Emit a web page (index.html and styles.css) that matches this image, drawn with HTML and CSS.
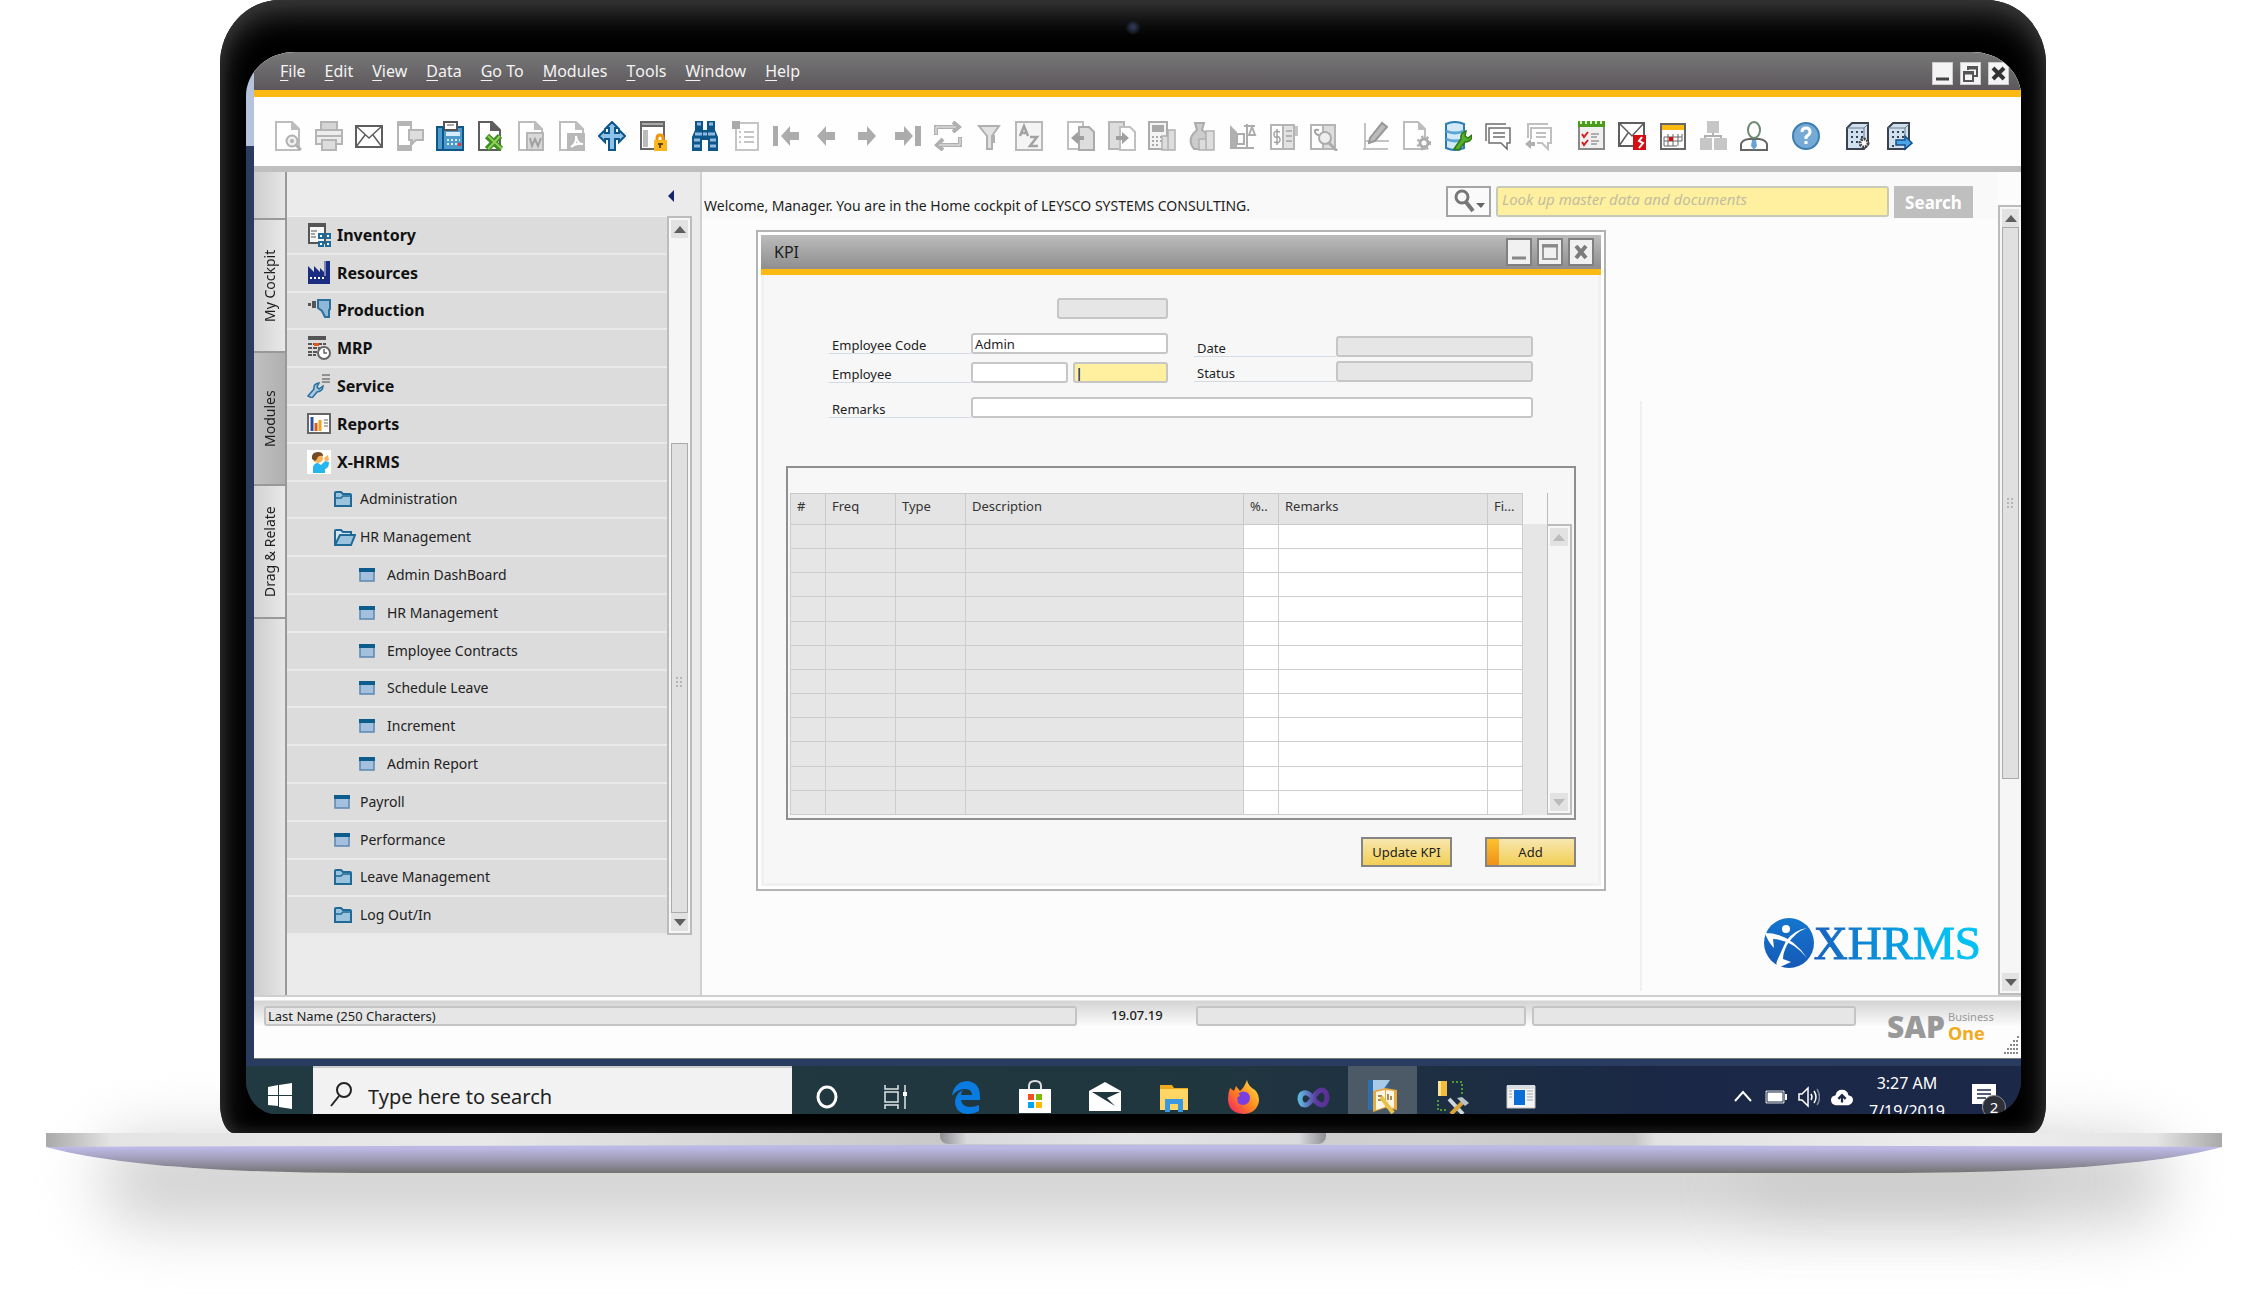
FILE: index.html
```html
<!DOCTYPE html>
<html lang="en">
<head>
<meta charset="utf-8">
<meta name="viewport" content="width=device-width, initial-scale=1">
<title>X-HRMS for SAP Business One</title>
<link rel="stylesheet" href="styles.css">
</head>
<body>
<svg class="sprite" aria-hidden="true">
  <symbol id="page" viewBox="0 0 28 30"><path d="M2 1h16l7 7v21H2z" fill="#fff" stroke="#bdbdbd" stroke-width="2"/><path d="M17 0v9h9z" fill="#bdbdbd"/></symbol>
  <symbol id="folder" viewBox="0 0 18 16"><path d="M1 15V2q0-1 1-1h5l2 2h7q1 0 1 1v11z" fill="#9cc3dd" stroke="#1f6a97" stroke-width="2"/><path d="M1 7h6l2-2h8" fill="none" stroke="#1f6a97" stroke-width="1.5"/></symbol>
  <symbol id="folder-open" viewBox="0 0 22 17"><path d="M1 16V2q0-1 1-1h5l2 2h8v3" fill="#d5e4ef" stroke="#1f6a97" stroke-width="2"/><path d="M1 16L6 6h15l-4 10z" fill="#9cc3dd" stroke="#1f6a97" stroke-width="2"/></symbol>
  <symbol id="form" viewBox="0 0 16 14"><path d="M1 1h14v12H1z" fill="#a3c0de" stroke="#5b87b0" stroke-width="1.5"/><path d="M0 0h16v4H0z" fill="#0d5c8c"/></symbol>
</svg>

<main class="stage">
  <div class="lid">
    <span class="camera"></span>
    <div class="screen">
      <div class="desktop">
        <section class="app">
          <header class="menubar">
            <nav class="menus" aria-label="Menu">
              <button><u>F</u>ile</button><button><u>E</u>dit</button><button><u>V</u>iew</button><button><u>D</u>ata</button><button><u>G</u>o To</button><button><u>M</u>odules</button><button><u>T</u>ools</button><button><u>W</u>indow</button><button><u>H</u>elp</button>
            </nav>
            <div class="frame-buttons">
              <button aria-label="Minimize"><svg viewBox="0 0 21 23"><path d="M4 17h13" stroke="#444" stroke-width="3"/></svg></button>
              <button aria-label="Restore"><svg viewBox="0 0 21 23"><path d="M8 8V5h9v9h-3M4 10h9v9H4z" fill="none" stroke="#555" stroke-width="2"/><path d="M4 11h9M8 6h9" stroke="#555" stroke-width="3"/></svg></button>
              <button aria-label="Close"><svg viewBox="0 0 21 23"><path d="M5 6l11 11M16 6L5 17" stroke="#333" stroke-width="4"/></svg></button>
            </div>
          </header>

          <div class="toolbar" role="toolbar" aria-label="Tools">
            <div class="tools t10">
              <button aria-label="Preview"><svg viewBox="0 0 28 30"><use href="#page"/><circle cx="18" cy="20" r="5.500" fill="#eee" stroke="#b0b0b0" stroke-width="2"/><circle cx="18" cy="20" r="2" fill="#b0b0b0"/><path d="M22 24l5 5" stroke="#b0b0b0" stroke-width="3"/></svg></button>
              <button aria-label="Print"><svg viewBox="0 0 28 30"><path d="M6 1h16v8H6z" fill="#d5d5d5" stroke="#b5b5b5" stroke-width="2"/><path d="M1 9h26v14H1z" fill="#ededed" stroke="#b5b5b5" stroke-width="2"/><path d="M1 15h26" stroke="#b5b5b5" stroke-width="2"/><path d="M7 19h14v10H7z" fill="#ddd" stroke="#b5b5b5" stroke-width="2"/></svg></button>
              <button aria-label="Email"><svg viewBox="0 0 28 30"><path d="M1 5h26v21H1z" fill="#fff" stroke="#5e5e5e" stroke-width="2"/><path d="M1 5l13 12L27 5M1 26l9-12M27 26l-9-12" fill="none" stroke="#5e5e5e" stroke-width="1.500"/></svg></button>
              <button aria-label="SMS"><svg viewBox="0 0 28 30"><path d="M2 1h13v28H2z" fill="#fff" stroke="#b5b5b5" stroke-width="2"/><path d="M1 0h15v5H1zM1 24h15v6H1z" fill="#b5b5b5"/><path d="M13 9h14v10h-7l-4 4v-4h-3z" fill="#ddd" stroke="#b5b5b5" stroke-width="2"/></svg></button>
              <button aria-label="Fax"><svg viewBox="0 0 28 30"><path d="M1 6h26v23H1z" fill="#4e9acb" stroke="#0c568a" stroke-width="2"/><path d="M8 1h13v8H8z" fill="#fff" stroke="#555" stroke-width="2"/><path d="M11 4h7" stroke="#555"/><path d="M7 6v23" stroke="#0c568a" stroke-width="2"/><path d="M10 11h14v4H10z" fill="#d8ebf8"/><path d="M11 19h13M11 23h13" stroke="#d8ebf8" stroke-width="2" stroke-dasharray="2 2"/><path d="M22 22h3v3h-3z" fill="#e33"/></svg></button>
              <button aria-label="Export to Excel"><svg viewBox="0 0 28 30"><path d="M2 1h13l8 8v20H2z" fill="#fff" stroke="#5e5e5e" stroke-width="2"/><path d="M13 0l11 10H13z" fill="#5e5e5e"/><path d="M10 15l14 13M23 15L10 28" stroke="#3f8f1e" stroke-width="6"/><path d="M11 15l14 13M23 15L11 28" stroke="#8fce5a" stroke-width="2"/></svg></button>
              <button aria-label="Export to Word"><svg viewBox="0 0 28 30"><use href="#page"/><path d="M10 12h16v17H10z" fill="#d8d8d8" stroke="#b5b5b5" stroke-width="2"/><path d="M13 17l2 8 3-7 3 7 3-8" fill="none" stroke="#a0a0a0" stroke-width="2"/></svg></button>
              <button aria-label="Export to PDF"><svg viewBox="0 0 28 30"><use href="#page"/><path d="M9 12h18v18H9z" fill="#b8b8b8"/><path d="M13 26q6-4 5-11 1 8 7 8-7-1-12 3z" fill="none" stroke="#fff" stroke-width="2"/></svg></button>
              <button aria-label="Launch application"><svg viewBox="0 0 28 30"><path d="M14 1l6 6h-3v5h4V9l6 6-6 6v-3h-4v11h-6V18H7v3l-6-6 6-6v3h4V7H8z" fill="#8fc2e8" stroke="#0c568a" stroke-width="2"/></svg></button>
              <button aria-label="Lock screen"><svg viewBox="0 0 28 30"><path d="M2 1h23v27H2z" fill="#fff" stroke="#666" stroke-width="2"/><path d="M1 0h25v6H1z" fill="#666"/><path d="M3 3h21" stroke="#eee"/><path d="M4 9h5v17H4z" fill="#bbb"/><path d="M18 20v-3q0-3 3-3t3 3v3" fill="none" stroke="#f29400" stroke-width="3"/><path d="M15 19h13v11H15z" fill="#fcb71e"/><path d="M21 22v5M19 23h5" stroke="#6b4700" stroke-width="2"/></svg></button>
            </div>
            <div class="tools t9">
              <button aria-label="Find"><svg viewBox="0 0 28 30"><path d="M4 0h8v9h4V0h8v9l3 7v14H17V19h-6v11H1V16l3-7z" fill="#0c568a"/><path d="M6 3h4M18 3h4M4 13h7M17 13h7M3 19h6M19 19h6M3 25h6M19 25h6M12 13h4" stroke="#8fb9de" stroke-width="3"/></svg></button>
              <button aria-label="Add record"><svg viewBox="0 0 28 30"><path d="M4 2h22v27H4z" fill="#fff" stroke="#c5c5c5" stroke-width="2"/><path d="M0 0h8v8H0z" fill="#aaa"/><path d="M7 11h2M7 16h2M7 21h2M12 11h10M12 16h10M12 21h10" stroke="#c5c5c5" stroke-width="2"/></svg></button>
              <button aria-label="First record"><svg viewBox="0 0 28 30"><path d="M1 5h5v20H1zM9 15L18 5v6h9v8h-9v6z" fill="#acacac"/></svg></button>
              <button aria-label="Previous record"><svg viewBox="0 0 28 30"><path d="M4 15L13 5v6h9v8h-9v6z" fill="#acacac"/></svg></button>
              <button aria-label="Next record"><svg viewBox="0 0 28 30"><path d="M23 15L14 5v6H5v8h9v6z" fill="#acacac"/></svg></button>
              <button aria-label="Last record"><svg viewBox="0 0 28 30"><path d="M27 5h-6v20h6zM19 15L10 5v6H1v8h9v6z" fill="#acacac"/></svg></button>
              <button aria-label="Refresh"><svg viewBox="0 0 28 30"><path d="M2 14V6h22M19 1l6 5-6 5M26 16v8H3M9 18l-6 6 6 5" fill="none" stroke="#b0b0b0" stroke-width="4"/><path d="M2 13V6h20M26 17v7H5" fill="none" stroke="#eee"/></svg></button>
              <button aria-label="Filter"><svg viewBox="0 0 28 30"><path d="M4 5h20l-7 10v13h-5V15z" fill="#e2e2e2" stroke="#b0b0b0" stroke-width="2"/><path d="M19 14v7h-3" fill="none" stroke="#b0b0b0" stroke-width="2"/></svg></button>
              <button aria-label="Sort"><svg viewBox="0 0 28 30"><path d="M1 1h26v28H1z" fill="#f4f4f4" stroke="#b8b8b8" stroke-width="2"/><path d="M5 15l4-10 4 10M6 12h6M15 16h7l-7 9h8" fill="none" stroke="#a2a2a2" stroke-width="2.500"/></svg></button>
            </div>
            <div class="tools t7">
              <button aria-label="Base document"><svg viewBox="0 0 28 30"><path d="M1 1h15v27H1z" fill="#fff" stroke="#c0c0c0" stroke-width="2"/><path d="M12 6h10l5 5v18H12z" fill="#ddd" stroke="#aaa" stroke-width="2"/><path d="M4 17l7-6v4h6v4h-6v4z" fill="#9f9f9f"/></svg></button>
              <button aria-label="Target document"><svg viewBox="0 0 28 30"><path d="M1 1h15v27H1z" fill="#ddd" stroke="#b5b5b5" stroke-width="2"/><path d="M12 6h10l5 5v18H12z" fill="#fff" stroke="#c0c0c0" stroke-width="2"/><path d="M21 17l-7-6v4H8v4h6v4z" fill="#9f9f9f"/></svg></button>
              <button aria-label="Gross profit"><svg viewBox="0 0 28 30"><path d="M1 1h18v27H1z" fill="#f3f3f3" stroke="#acacac" stroke-width="2"/><path d="M4 4h12v7H4z" fill="#a9a9a9"/><path d="M4 16h10M4 20h10M4 24h8" stroke="#a9a9a9" stroke-width="2" stroke-dasharray="2 2"/><path d="M14 15h6v14h-6zM20 9h7v20h-7z" fill="#ddd" stroke="#b0b0b0" stroke-width="1.500"/></svg></button>
              <button aria-label="Payment means"><svg viewBox="0 0 28 30"><path d="M6 2h9l-2 7q10 6 8 19H5q-8-10 3-19z" fill="#ccc" stroke="#acacac" stroke-width="2"/><path d="M10 18h7v11h-7zM17 10h8v19h-8z" fill="#ddd" stroke="#b0b0b0" stroke-width="1.500"/></svg></button>
              <button aria-label="Volume and weight"><svg viewBox="0 0 28 30"><path d="M1 4l7 7v17H1z" fill="#b0b0b0"/><path d="M1 27h24M8 13h7v10H8zM18 3v24M15 5h11M23 6l-3 8h6z" fill="none" stroke="#acacac" stroke-width="2"/></svg></button>
              <button aria-label="Journal preview"><svg viewBox="0 0 28 30"><path d="M1 4h12v24H1z" fill="#fff" stroke="#b5b5b5" stroke-width="2"/><path d="M13 4h11v24H13z" fill="#e2e2e2" stroke="#b5b5b5" stroke-width="2"/><path d="M10 11q-6-2-6 2t3 3 3 3-6 2M7 8v16M16 10h6M16 15h6M16 20h6" fill="none" stroke="#a2a2a2" stroke-width="1.500"/><path d="M25 5h3v10h-3z" fill="#c5c5c5"/></svg></button>
              <button aria-label="Transaction journal"><svg viewBox="0 0 28 30"><path d="M1 4h12v24H1z" fill="#fff" stroke="#b5b5b5" stroke-width="2"/><path d="M13 4h12v24H13z" fill="#ddd" stroke="#b5b5b5" stroke-width="2"/><path d="M9 9q-5-1-4 2t4 3" fill="none" stroke="#a2a2a2" stroke-width="2"/><circle cx="15" cy="17" r="6" fill="#eee" stroke="#acacac" stroke-width="2"/><path d="M19 22l8 8" stroke="#acacac" stroke-width="3"/></svg></button>
            </div>
            <div class="tools t5">
              <button aria-label="Layout designer"><svg viewBox="0 0 28 30"><path d="M3 2v26M1 28h25M3 20h24" stroke="#c3c3c3" stroke-width="2"/><path d="M8 17L20 2l5 4-12 14-6 2z" fill="#bbb" stroke="#979797" stroke-width="2"/></svg></button>
              <button aria-label="Form settings"><svg viewBox="0 0 28 30"><path d="M1 1h14l7 7v20H1z" fill="#fff" stroke="#bdbdbd" stroke-width="2"/><path d="M15 1v8h8z" fill="#bdbdbd"/><circle cx="21" cy="22" r="4" fill="#fff" stroke="#acacac" stroke-width="3"/><circle cx="21" cy="22" r="6" fill="none" stroke="#acacac" stroke-width="3" stroke-dasharray="2 3"/></svg></button>
              <button aria-label="Query manager"><svg viewBox="0 0 28 30"><path d="M2 3q9-4 18 0v24q-9 4-18 0z" fill="#d3e9f8" stroke="#2b7db5" stroke-width="2"/><path d="M2 10q9 4 18 0M2 18q9 4 18 0" fill="none" stroke="#5ba5d6" stroke-width="3"/><path d="M10 28l7-10q-1-6 5-8l-1 5 3 2 4-3q0 7-7 7l-6 8z" fill="#58b030" stroke="#2f7a13" stroke-width="1.500"/></svg></button>
              <button aria-label="Messages"><svg viewBox="0 0 28 30"><path d="M2 20V3h20" fill="none" stroke="#6e6e6e" stroke-width="1.500"/><path d="M5 7h21v15h-3v6l-6-6H5z" fill="#fff" stroke="#6e6e6e" stroke-width="1.500"/><path d="M9 12h12M9 16h12" stroke="#6e6e6e" stroke-width="1.500"/></svg></button>
              <button aria-label="Send message"><svg viewBox="0 0 28 30"><path d="M3 17V3h20" fill="none" stroke="#c0c0c0" stroke-width="2"/><path d="M6 18V7h20v15h-3v6l-6-6h-5" fill="#fff" stroke="#c0c0c0" stroke-width="2"/><path d="M11 12h10M11 16h10" stroke="#c0c0c0" stroke-width="2"/><path d="M10 23l-6-5v3H0v4h4v3z" fill="#b0b0b0" transform="rotate(180 5 23)"/></svg></button>
            </div>
            <div class="tools t5">
              <button aria-label="Checklist"><svg viewBox="0 0 28 30"><path d="M2 4h25v24H2z" fill="#f0f0f0" stroke="#8a8a8a" stroke-width="2"/><path d="M1 0h27v6H1z" fill="#4b9b1c"/><path d="M4 0v3M9 0v3M14 0v3M19 0v3M24 0v3" stroke="#d9f0c8" stroke-width="2"/><path d="M5 13l2 3 4-5M5 21l2 3 4-5" fill="none" stroke="#d21f1f" stroke-width="2"/><path d="M14 13h8M14 16h6M14 20h8M14 23h6" stroke="#999" stroke-width="1.500"/></svg></button>
              <button aria-label="Alerts"><svg viewBox="0 0 28 30"><path d="M1 2h25v23H1z" fill="#fff" stroke="#5e5e5e" stroke-width="2"/><path d="M1 2l13 13L26 2M1 25l9-13" fill="none" stroke="#5e5e5e" stroke-width="1.500"/><path d="M15 14h13v15H15z" fill="#d40f14"/><path d="M24 16l-3 4 4 2-4 5" fill="none" stroke="#fff" stroke-width="2"/></svg></button>
              <button aria-label="Calendar"><svg viewBox="0 0 28 30"><path d="M2 3h24v25H2z" fill="#fff" stroke="#666" stroke-width="2"/><path d="M3 4h22v5H3z" fill="#fcb912"/><path d="M5 16h18M5 20h18M5 25h13M9 13v12M14 13v12M19 13v12M23 13v7M5 16v9" stroke="#666"/><path d="M10 16h4v4h-4z" fill="#d40f14"/></svg></button>
              <button aria-label="Organisation"><svg viewBox="0 0 28 30"><path d="M8 0h12v12H8zM1 17h12v12H1zM15 17h13v12H15z" fill="#c6c6c6"/><path d="M14 12v4M6 17v-2h16v2" fill="none" stroke="#b0b0b0" stroke-width="2"/></svg></button>
              <button aria-label="User"><svg viewBox="0 0 28 30"><path d="M1 29v-6q1-4 8-5h10q7 1 8 5v6z" fill="#fff" stroke="#666" stroke-width="2"/><ellipse cx="14" cy="9" rx="6" ry="8" fill="#fff" stroke="#6b8a70" stroke-width="2"/><path d="M12 19h4l1 6-3 4-3-4z" fill="#6aa4d4"/></svg></button>
            </div>
            <div class="tools t1">
              <button aria-label="Help"><svg viewBox="0 0 28 30"><circle cx="14" cy="15" r="13" fill="#75a9d6" stroke="#3d7fb0" stroke-width="2"/><path d="M10 11q0-4 4-4t4 4q0 2-4 5v2M14 20v3" fill="none" stroke="#fff" stroke-width="3"/></svg></button>
            </div>
            <div class="tools t2">
              <button aria-label="Server settings"><svg viewBox="0 0 28 30"><path d="M3 7l5-5h16v21l-4 5H3z" fill="#cfe0ee" stroke="#39424e" stroke-width="2"/><path d="M3 7h17v20M20 7l4-4" fill="none" stroke="#6c7a88"/><path d="M7 11h2M12 11h2M17 11h2M7 16h2M12 16h2M17 16h2M7 21h2M12 21h2" stroke="#39424e" stroke-width="2"/><circle cx="20" cy="22" r="4" fill="#fff" stroke="#444" stroke-width="3" stroke-dasharray="2 1"/></svg></button>
              <button aria-label="Server connection"><svg viewBox="0 0 28 30"><path d="M3 7l5-5h16v21l-4 5H3z" fill="#cfe0ee" stroke="#39424e" stroke-width="2"/><path d="M3 7h17v10M20 7l4-4" fill="none" stroke="#6c7a88"/><path d="M7 11h2M12 11h2M17 11h2M7 16h2M12 16h2M17 16h2M7 25h2" stroke="#39424e" stroke-width="2"/><path d="M11 19h9v-4l7 7-7 6v-4h-9z" fill="#4aa3e6" stroke="#174f8a" stroke-width="1.500"/></svg></button>
            </div>
          </div>

          <div class="workarea">
            <div class="side-tabs">
              <span class="tab-cap"></span>
              <button>My Cockpit</button>
              <button class="active">Modules</button>
              <button>Drag &amp; Relate</button>
              <span class="tab-rest"></span>
            </div>
            <aside class="sidebar">
              <button class="collapse" aria-label="Collapse"></button>
              <div class="tree-wrap">
                <ul class="tree">
                  <li><a href="#"><svg viewBox="0 0 24 24"><path d="M2 1h16v19H2z" fill="#f6f6f6" stroke="#555" stroke-width="2"/><path d="M1 0h18v4H1z" fill="#555"/><path d="M4 8h6M4 11h4M4 14h5" stroke="#555"/><path d="M12 11h4v4h-4zM19 11h4v4h-4zM12 19h4v4h-4zM19 19h4v4h-4z" fill="#fff" stroke="#1d6c9c" stroke-width="2"/></svg>Inventory</a></li>
                  <li><a href="#"><svg viewBox="0 0 24 24"><path d="M1 23V5l6 6V5l6 6V7l4 4V0h6v23z" fill="#1b2d80"/><path d="M18 0v15" stroke="#dfe3f2"/><path d="M3 17h16" stroke="#fff" stroke-width="2" stroke-dasharray="2 2"/></svg>Resources</a></li>
                  <li><a href="#"><svg viewBox="0 0 24 24"><path d="M1 5h3v3H1zM5 3h4v7H5z" fill="#555"/><path d="M11 2h12v9l-1 1v7h-4l-3-6-4-3z" fill="#8fb8d8" stroke="#2b6f9f" stroke-width="2"/></svg>Production</a></li>
                  <li><a href="#"><svg viewBox="0 0 24 24"><path d="M1 0h18v4H1z" fill="#555"/><path d="M1 8h18M1 12h12M1 16h9M1 19h8" stroke="#555" stroke-width="2" stroke-dasharray="4 1"/><path d="M7 7h5v3H7z" fill="#e3571b"/><circle cx="17" cy="17" r="6" fill="#fff" stroke="#666" stroke-width="2"/><path d="M17 13v4h3" fill="none" stroke="#666" stroke-width="1.500"/></svg>MRP</a></li>
                  <li><a href="#"><svg viewBox="0 0 24 24"><path d="M15 1h8M15 5h8M15 8h8" stroke="#777" stroke-width="1.500"/><path d="M1 22l6-7q-1-5 5-6l-2 4 2 2 4-3q0 5-6 6l-5 6z" fill="#a9c9e2" stroke="#2b6f9f" stroke-width="1.500"/></svg>Service</a></li>
                  <li><a href="#"><svg viewBox="0 0 24 24"><path d="M1 2h22v19H1z" fill="#fff" stroke="#666" stroke-width="2"/><path d="M5 5v14" stroke="#2b4ea0" stroke-width="3"/><path d="M9 11v8" stroke="#e3571b" stroke-width="3"/><path d="M13 8v11" stroke="#f5a21b" stroke-width="3"/><path d="M17 8h4M17 11h4M17 14h4" stroke="#666"/></svg>Reports</a></li>
                  <li><a href="#"><svg viewBox="0 0 24 24"><path d="M0 0h24v24H0z" fill="#fff"/><path d="M6 23v-6q1-4 5-4l3 2 4-4 4 1q0 6-4 7v4z" fill="#27b5f0"/><circle cx="11" cy="8" r="5" fill="#f7b35c"/><path d="M5 9q-1-7 6-7 5 0 5 4-5-1-6 3l-2 2z" fill="#774a24"/><path d="M17 8l4-3 1 5-3 2z" fill="#f7b35c"/></svg>X-HRMS</a></li>
                  <li class="sub"><a href="#"><svg viewBox="0 0 18 16"><use href="#folder"/></svg>Administration</a></li>
                  <li class="sub"><a href="#"><svg class="open" viewBox="0 0 22 17"><use href="#folder-open"/></svg>HR Management</a></li>
                  <li class="leaf"><a href="#"><svg viewBox="0 0 16 14"><use href="#form"/></svg>Admin DashBoard</a></li>
                  <li class="leaf"><a href="#"><svg viewBox="0 0 16 14"><use href="#form"/></svg>HR Management</a></li>
                  <li class="leaf"><a href="#"><svg viewBox="0 0 16 14"><use href="#form"/></svg>Employee Contracts</a></li>
                  <li class="leaf"><a href="#"><svg viewBox="0 0 16 14"><use href="#form"/></svg>Schedule Leave</a></li>
                  <li class="leaf"><a href="#"><svg viewBox="0 0 16 14"><use href="#form"/></svg>Increment</a></li>
                  <li class="leaf"><a href="#"><svg viewBox="0 0 16 14"><use href="#form"/></svg>Admin Report</a></li>
                  <li class="sub"><a href="#"><svg class="form" viewBox="0 0 16 14"><use href="#form"/></svg>Payroll</a></li>
                  <li class="sub"><a href="#"><svg class="form" viewBox="0 0 16 14"><use href="#form"/></svg>Performance</a></li>
                  <li class="sub"><a href="#"><svg viewBox="0 0 18 16"><use href="#folder"/></svg>Leave Management</a></li>
                  <li class="sub"><a href="#"><svg viewBox="0 0 18 16"><use href="#folder"/></svg>Log Out/In</a></li>
                </ul>
                <div class="scroll side-scroll"><i class="up"></i><b><span class="grip"></span></b><i class="down"></i></div>
              </div>
            </aside>

            <section class="cockpit">
              <div class="canvas">
                <header class="welcome">
                  <p>Welcome, Manager. You are in the Home cockpit of LEYSCO SYSTEMS CONSULTING.</p>
                  <form class="lookup">
                    <button type="button" class="scope" aria-label="Search scope"><svg viewBox="0 0 44 31"><circle cx="15" cy="11" r="6" fill="none" stroke="#777" stroke-width="3"/><path d="M19 16l7 9" stroke="#777" stroke-width="4"/><path d="M29 17h9l-4 5z" fill="#666"/></svg></button>
                    <input type="text" aria-label="Look up" placeholder="Look up master data and documents">
                    <button type="button" class="go">Search</button>
                  </form>
                </header>
                <div class="panes">
                  <section class="window">
                    <header class="titlebar">
                      <h1>KPI</h1>
                      <button aria-label="Minimize"><svg viewBox="0 0 22 24"><path d="M4 18h14" stroke="#888" stroke-width="3"/></svg></button>
                      <button aria-label="Maximize"><svg viewBox="0 0 22 24"><path d="M4 5h14v14H4z" fill="none" stroke="#999" stroke-width="2"/><path d="M3 6h16" stroke="#888" stroke-width="3"/></svg></button>
                      <button aria-label="Close"><svg viewBox="0 0 22 24"><path d="M6 6l10 12M16 6L6 18" stroke="#7c7c7c" stroke-width="4"/></svg></button>
                    </header>
                    <form class="kpi">
                      <div class="fields">
                        <div class="doc"><input type="text" aria-label="Document number" disabled></div>
                        <div class="columns">
                          <div class="col left">
                            <div class="field"><label for="code">Employee Code</label><input id="code" type="text" value="Admin"></div>
                            <div class="field"><label for="first">Employee</label><input id="first" type="text"><input class="focus" type="text" aria-label="Last name" value="|"></div>
                          </div>
                          <div class="col right">
                            <div class="field"><label for="date">Date</label><input id="date" type="text" disabled></div>
                            <div class="field"><label for="status">Status</label><input id="status" type="text" disabled></div>
                          </div>
                        </div>
                        <div class="field"><label for="remarks">Remarks</label><input id="remarks" type="text"></div>
                      </div>
                      <div class="matrix">
                        <table>
                          <colgroup><col class="c-s"><col class="c-m"><col class="c-m"><col><col class="c-s"><col class="c-l"><col class="c-s"></colgroup>
                          <thead><tr><th>#</th><th>Freq</th><th>Type</th><th>Description</th><th>%..</th><th>Remarks</th><th>Fi...</th></tr></thead>
                          <tbody>
                            <tr><td><td><td><td><td><td><td></tr><tr><td><td><td><td><td><td><td></tr><tr><td><td><td><td><td><td><td></tr>
                            <tr><td><td><td><td><td><td><td></tr><tr><td><td><td><td><td><td><td></tr><tr><td><td><td><td><td><td><td></tr>
                            <tr><td><td><td><td><td><td><td></tr><tr><td><td><td><td><td><td><td></tr><tr><td><td><td><td><td><td><td></tr>
                            <tr><td><td><td><td><td><td><td></tr><tr><td><td><td><td><td><td><td></tr><tr><td><td><td><td><td><td><td></tr>
                          </tbody>
                        </table>
                        <span class="filler"></span>
                        <div class="matrix-side"><div class="scroll faint"><i class="up"></i><i class="down"></i></div></div>
                      </div>
                      <div class="actions">
                        <button type="button">Update KPI</button>
                        <button type="button" class="primary">Add</button>
                      </div>
                    </form>
                  </section>
                  <div class="empty-pane"></div>
                </div>
                <div class="brand">
                  <svg viewBox="0 0 50 50"><defs><linearGradient id="disc" x2="0" y2="1"><stop stop-color="#1476cd"/><stop offset="1" stop-color="#1659b8"/></linearGradient></defs><circle cx="25" cy="25" r="25" fill="url(#disc)"/><circle cx="22" cy="11" r="4" fill="#fff"/><path d="M1 15Q26 15 43 40 28 22 9 21l1 9q-6-6-9-15zM43 10Q31 14 23 27q-4 8-4 14l8 3-11 5q-5-1-3-6l9-20Q30 12 43 10z" fill="#fff"/></svg>
                  <span>XHRMS</span>
                </div>
              </div>
              <div class="scroll main-scroll"><i class="up"></i><b><span class="grip"></span></b><i class="down"></i></div>
            </section>
          </div>

          <footer class="statusbar">
            <output class="message">Last Name (250 Characters)</output>
            <time>19.07.19</time>
            <output class="slot"></output>
            <output class="slot last"></output>
            <div class="sap"><strong>SAP</strong><span><small>Business</small><em>One</em></span></div>
            <svg class="resize" viewBox="0 0 16 18"><path d="M1 17h15M4 13h12M7 9h9M10 5h6M14 1h2" stroke="#888" stroke-width="2" stroke-dasharray="2 1"/></svg>
          </footer>
        </section>
      </div>

      <footer class="taskbar">
        <button class="start" aria-label="Start"><svg viewBox="0 0 24 26"><path d="M0 4l10-2v10H0zM11 2l13-2v12H11zM0 13h10v10L0 22zM11 13h13v13l-13-2z" fill="#fff"/></svg></button>
        <label class="find"><svg viewBox="0 0 24 26"><circle cx="15" cy="9" r="7" fill="none" stroke="#222" stroke-width="2"/><path d="M10 15L2 25" stroke="#222" stroke-width="2"/></svg><input type="text" placeholder="Type here to search" aria-label="Type here to search"></label>
        <div class="pins">
          <button aria-label="Cortana"><svg viewBox="0 0 34 34"><ellipse cx="17" cy="17" rx="9" ry="10" fill="none" stroke="#fff" stroke-width="3"/></svg></button>
          <button aria-label="Task view"><svg viewBox="0 0 34 34"><path d="M6 5v4h13V5M6 12h13v10H6zM6 29v-4h13v4M26 5v24" fill="none" stroke="#dfe6e8" stroke-width="1.500"/><path d="M24 12h4v4h-4z" fill="#fff"/></svg></button>
          <button aria-label="Edge"><svg viewBox="0 0 34 34"><path d="M3 16Q5 2 18 1q13 1 13 16v3H12q1 7 9 7 5 0 9-2v6q-5 3-12 3Q6 33 6 21q1-8 8-11-2 2-2 5h11q0-6-7-6-8 0-13 7z" fill="#0a7be0"/></svg></button>
          <button aria-label="Store"><svg viewBox="0 0 34 34"><path d="M11 9V6q0-5 6-5t6 5v3" fill="none" stroke="#ddd" stroke-width="2"/><path d="M1 9h32v24H1z" fill="#fff"/><path d="M10 14h6v6h-6z" fill="#f25022"/><path d="M18 14h6v6h-6z" fill="#7fba00"/><path d="M10 22h6v6h-6z" fill="#00a4ef"/><path d="M18 22h6v6h-6z" fill="#ffb900"/></svg></button>
          <button aria-label="Mail"><svg viewBox="0 0 34 34"><path d="M1 11L17 2l16 9v20H1z" fill="#fff"/><path d="M4 12h28l-13 6 8 8L4 12z" fill="#20373f"/></svg></button>
          <button aria-label="Explorer"><svg viewBox="0 0 34 34"><path d="M3 5h12l2 3h14v22H3z" fill="#f0a81c"/><path d="M3 9h28v21H3z" fill="#ffd564"/><path d="M8 32V19h18v13h-5v-8h-8v8z" fill="#3a98e0"/></svg></button>
          <button aria-label="Firefox"><svg viewBox="0 0 34 34"><defs><linearGradient id="fox" x1="1" x2="0" y2="1"><stop stop-color="#ffe84a"/><stop offset=".5" stop-color="#ff8a1d"/><stop offset="1" stop-color="#f0186c"/></linearGradient></defs><path d="M4 8l4 3 2-5 4 5q4-3 7-11 1 6 8 10 4 4 4 11-2 12-15 13Q2 33 2 19q0-6 2-11z" fill="url(#fox)"/><path d="M11 15q5-6 11-2 4 5 0 10-5 4-10 0z" fill="#7a3fe0"/><path d="M8 12q4 0 6 4l-5 2z" fill="#ff7a18"/></svg></button>
          <button aria-label="Visual Studio"><svg viewBox="0 0 34 34"><defs><linearGradient id="loop"><stop stop-color="#5fb4dc"/><stop offset=".6" stop-color="#5b3aa0"/><stop offset="1" stop-color="#5a2f96"/></linearGradient></defs><path d="M17 18q-5-6-9-5-4 1-4 6 1 6 5 6t8-7q5-8 9-8 5 1 5 8-1 7-5 7t-9-7z" fill="none" stroke="url(#loop)" stroke-width="5"/></svg></button>
          <button class="running" aria-label="SAP Business One"><svg viewBox="0 0 34 34"><path d="M3 0h22L14 30H3z" fill="#2f6fae"/><path d="M8 0h17L8 24z" fill="#a9cbe8"/><path d="M8 11l12-3 12 2v20l-12-2-12 4z" fill="#e8a93f"/><path d="M11 12l9-2v17l-9 3zM21 10l8 1v17l-8-1z" fill="#fdf6e4"/><path d="M13 16h4M13 20h4M23 14v6M26 16v4" stroke="#8a6a2a" stroke-width="1.500"/><path d="M16 17l12 16" stroke="#e9c24a" stroke-width="4"/></svg></button>
          <button aria-label="Tools"><svg viewBox="0 0 34 34"><path d="M3 1h9v15H3z" fill="#f1bd3b"/><path d="M3 1h3v15H3z" fill="#fde39a"/><path d="M17 2h10v12M3 20v10h10" fill="none" stroke="#4e9a2f" stroke-width="2" stroke-dasharray="2 2"/><path d="M14 19l14 15" stroke="#cfd6dc" stroke-width="4"/><path d="M28 22L16 34" stroke="#d9a33a" stroke-width="4"/><path d="M22 18l5-1 7 6-4 3z" fill="#b9c2ca"/></svg></button>
          <button aria-label="Window"><svg viewBox="0 0 34 34"><path d="M3 6h28v22H3z" fill="#f4f4f4" stroke="#c5c5c5"/><path d="M3 5h28v4H3z" fill="#d8dde2"/><path d="M10 10h11v15H10z" fill="#0a6ed6"/><path d="M5 11h3M5 14h3M5 17h3M23 11h6M23 14h6M23 17h6M23 20h6" stroke="#9aa3aa"/></svg></button>
        </div>
        <div class="tray">
          <svg viewBox="0 0 20 24"><path d="M2 16l8-9 8 9" fill="none" stroke="#fff" stroke-width="2"/></svg>
          <svg viewBox="0 0 22 24"><path d="M1 6h18v12H1z" fill="#fff" stroke="#cfd4dc"/><path d="M2 7h16v10H2z" fill="#fff" stroke="#1c2a44"/><path d="M20 9h2v6h-2z" fill="#fff"/></svg>
          <svg viewBox="0 0 22 24"><path d="M1 9h3l6-6v18l-6-6H1z" fill="none" stroke="#fff" stroke-width="1.500"/><path d="M13 9q2 3 0 6M16 6q4 6 0 12" fill="none" stroke="#fff" stroke-width="1.500"/><path d="M19 4q5 8 0 16" fill="none" stroke="#7c869a" stroke-width="1.500"/></svg>
          <svg viewBox="0 0 24 24"><path d="M5 21q-5-1-5-6 0-4 5-5 1-6 7-6t7 6q5 1 5 5t-5 6z" fill="#fff"/><path d="M12 18v-7M8 14l4-4 4 4" fill="none" stroke="#1c2a44" stroke-width="2.500"/></svg>
          <div class="clock"><time>3:27 AM</time><time>7/19/2019</time></div>
          <button class="notes" aria-label="Notifications"><svg viewBox="0 0 24 26"><path d="M0 0h24v20H14l-4 6v-6H0z" fill="#fff"/><path d="M5 6h14M5 10h14M5 14h9" stroke="#1c2a44" stroke-width="1.500"/></svg><span>2</span></button>
        </div>
      </footer>
    </div>
  </div>
  <div class="base">
    <svg class="belly" viewBox="0 0 2176 40" preserveAspectRatio="none"><defs><linearGradient id="metal" x2="0" y2="1"><stop offset=".1" stop-color="#bdb9e6"/><stop offset=".5" stop-color="#a09db8"/><stop offset="1" stop-color="#737373"/></linearGradient></defs><path d="M0 14Q1088 10 2176 14Q2080 40 1830 40H320Q96 40 0 14z" fill="url(#metal)"/></svg>
    <span class="notch"></span>
  </div>
</main>
</body>
</html>
```
FILE: styles.css
```css
* { box-sizing: border-box; }
body { margin: 0; background: #fff; color: #1d1d1d; font-family: "Noto Sans", "Open Sans", sans-serif; font-size: 14px; }
button, input { font: inherit; color: inherit; margin: 0; padding: 0; border: 0; background: none; border-radius: 0; outline: 0; min-width: 0; }
button { display: flex; align-items: center; justify-content: center; }
svg { display: block; flex: none; }
ul, p, h1 { margin: 0; padding: 0; }
.sprite { position: absolute; width: 0; height: 0; }

/* Laptop shell */
.stage { padding: 0 24px 0 46px; min-height: 100vh; overflow: hidden; }
.lid { position: relative; margin: 0 176px 0 174px; padding: 52px 25px 19px 26px; background: #000; border-radius: 60px 60px 14px 14px / 64px 64px 30px 30px; box-shadow: inset 0 14px 30px #3a3a3a, inset 0 0 16px #222; }
.camera { position: absolute; top: 20px; left: 50%; width: 14px; height: 14px; margin-left: -7px; border-radius: 50%; background: radial-gradient(#2b3350 20%, #15161c 60%); }
.screen { overflow: hidden; border-radius: 49px 49px 30px 30px / 44px 44px 34px 34px; background: #293956; }
.desktop { padding: 0 0 7px 8px; background: linear-gradient(#b6c3dc 94px, #2a3b60 94px); }
.app { background: #fdfdfd; border-bottom: 1px solid #777; }

/* Menu bar */
.menubar { display: flex; justify-content: space-between; align-items: center; height: 45px; padding: 0 12px 0 26px; background: linear-gradient(#787878, #5c575b); border-bottom: 7px solid #fdb913; }
.menus { display: flex; gap: 19px; font-size: 16px; color: #f4f4f4; }
.menus u { text-underline-offset: 3px; }
.frame-buttons { display: flex; gap: 7px; padding-top: 4px; }
.frame-buttons button { width: 21px; height: 23px; background: #f4f4f4; border: 1px solid #ccc; }
.frame-buttons svg { width: 21px; height: 23px; }

/* Toolbar */
.toolbar { display: flex; gap: 24px; height: 75px; padding: 24px 0 0 20px; background: #fefefe; border-bottom: 6px solid #bfbfbf; }
.tools { display: flex; justify-content: space-between; align-items: flex-start; }
.tools svg { width: 28px; height: 30px; }
.t10 { width: 393px; } .t9 { width: 352px; } .t7 { width: 271px; } .t5 { width: 191px; } .t1 { width: 28px; } .t2 { width: 69px; }

/* Work area */
.workarea { display: flex; min-height: 825px; border-bottom: 2px solid #cfcfcf; }
.side-tabs { display: flex; flex-direction: column; flex: none; width: 33px; border-right: 2px solid #999; background: linear-gradient(90deg, #cdcdcd, #e6e6e6); }
.side-tabs button { height: 133px; writing-mode: vertical-rl; transform: rotate(180deg); border-top: 2px solid #999; font-size: 14px; background: linear-gradient(270deg, #d2d2d2, #e9e9e9); }
.side-tabs .active { background: linear-gradient(270deg, #c0c0c0, #b0b0b0); }
.tab-cap { height: 48px; border-bottom: 2px solid #999; }
.tab-rest { flex: 1; }
.sidebar { display: flex; flex-direction: column; flex: none; width: 415px; padding-bottom: 60px; background: #ebebeb; border-right: 2px solid #d0d0d0; }
.collapse { width: 16px; height: 44px; margin-left: 376px; padding-top: 4px; }
.collapse::before { content: ""; border: 6px solid transparent; border-right-color: #14256a; border-left: 0; }
.tree-wrap { display: flex; flex: 1; }
.tree { display: flex; flex-direction: column; width: 380px; list-style: none; border-top: 1px solid #f2f2f2; }
.tree li { display: flex; flex: 1; background: #dcdcdc; border-bottom: 2px solid #e9e9e9; }
.tree a { display: flex; flex: 1; align-items: center; gap: 6px; padding-left: 20px; color: #111; text-decoration: none; font-size: 16px; font-weight: 700; line-height: 20px; }
.tree svg { width: 24px; height: 24px; }
.tree .sub a, .tree .leaf a { color: #222; font-size: 14px; font-weight: 400; gap: 8px; padding-left: 47px; }
.tree .sub svg { width: 18px; height: 16px; }
.tree .sub .open { width: 22px; height: 17px; margin-right: -4px; }
.tree .sub .form { width: 16px; height: 14px; margin-right: 2px; }
.tree .leaf a { gap: 12px; padding-left: 72px; }
.tree .leaf svg { width: 16px; height: 14px; }

.scroll { display: flex; flex-direction: column; justify-content: space-between; width: 25px; padding: 2px; border: 2px solid #bcbcbc; background: #f6f6f6; }
.scroll i { display: flex; align-items: center; justify-content: center; height: 18px; background: #e2e2e2; }
.scroll i::before { content: ""; border: 6px solid transparent; }
.scroll .up::before { border-bottom: 7px solid #5e5e5e; border-top: 0; }
.scroll .down::before { border-top: 7px solid #5e5e5e; border-bottom: 0; }
.scroll b { display: flex; align-items: center; justify-content: center; flex: 1; background: #e0e0e0; border: 1px solid #aaa; }
.side-scroll b { margin-top: 205px; padding-bottom: 224px; align-items: flex-end; }
.grip { width: 9px; height: 12px; background: radial-gradient(circle, #b5b5b5 1px, transparent 1px) 0 0 / 4px 4px; }
.faint .up::before { border-bottom-color: #bbb; }
.faint .down::before { border-top-color: #bbb; }

/* Cockpit */
.cockpit { display: flex; flex: 1; background: #fcfcfc; }
.canvas { position: relative; flex: 1; }
.welcome { display: flex; justify-content: space-between; height: 47px; padding: 14px 25px 0 2px; background: #f9f9f9; }
.welcome p { padding-top: 10px; font-size: 14px; line-height: 20px; }
.lookup { display: flex; gap: 5px; height: 32px; }
.scope { width: 45px; height: 31px; border: 2px solid #a5a5a5; background: #fafafa; }
.scope svg { width: 44px; height: 31px; }
.lookup input { width: 393px; height: 31px; padding: 0 4px 6px; background: #fff09f; border: 2px solid #c9c9b8; border-radius: 3px; font-size: 15px; font-style: italic; }
.lookup input::placeholder { color: #c2bda0; opacity: 1; }
.go { width: 79px; background: #bfbfbf; color: #fff; font-size: 17px; font-weight: 700; }
.panes { display: flex; justify-content: space-between; align-items: flex-start; padding: 11px 0 0 54px; }
.empty-pane { width: 358px; height: 590px; margin-top: 171px; border-left: 2px solid #f0f0f0; }
.main-scroll { width: 23px; margin-top: 33px; border-right: 0; }
.main-scroll b { margin-bottom: 194px; }
.brand { position: absolute; right: 17px; bottom: 22px; display: flex; align-items: center; }
.brand svg { width: 50px; height: 50px; }
.brand span { font: 47px/60px "Liberation Serif", serif; color: transparent; background: linear-gradient(90deg, #1860bf, #00bff3 80%); background-clip: text; -webkit-background-clip: text; -webkit-text-stroke: 1px transparent; }

/* KPI window */
.window { width: 850px; padding: 3px; border: 2px solid #b3b3b3; background: #fff; }
.titlebar { display: flex; align-items: center; gap: 5px; height: 40px; padding: 0 7px 0 13px; background: linear-gradient(#bcbcbc, #8e8e8e); border-bottom: 6px solid #fdb913; }
.titlebar h1 { flex: 1; font-size: 16px; font-weight: 400; }
.titlebar button { width: 26px; height: 28px; border: 2px solid #808080; background: #f1f1f1; }
.titlebar svg { width: 22px; height: 24px; }
.kpi { padding: 23px 22px 16px; background: #f7f7f7; border: solid #f1f1f1; border-width: 0 3px 3px; font-size: 13px; }
.fields { padding: 0 43px; display: flex; flex-direction: column; }
.kpi input { height: 21px; border: 2px solid #c6c6c6; border-radius: 3px; background: #fff; padding: 0 2px; }
.kpi input:disabled { background: #e6e6e6; }
.doc { display: flex; padding: 0 0 14px 228px; }
.doc input { width: 111px; }
.columns { display: flex; justify-content: space-between; margin-bottom: 14px; }
.col { display: flex; flex-direction: column; width: 339px; }
.left { gap: 8px; }
.right { gap: 4px; padding-top: 3px; }
.field { display: flex; gap: 5px; }
.field label { flex: none; width: 142px; height: 21px; margin-right: -5px; padding-left: 3px; line-height: 24px; border-bottom: 1px solid #d5dbe3; }
.field input { flex: 1; width: 0; }
.kpi .focus { background: #fff09f; color: #24336b; padding-left: 1px; font-weight: 700; }
.matrix { display: flex; align-items: stretch; margin-top: 48px; padding: 25px 2px 3px; border: 2px solid #8f8f8f; }
.matrix table { flex: 1; height: 322px; table-layout: fixed; border-collapse: collapse; }
.c-s { width: 35px; } .c-m { width: 70px; } .c-l { width: 209px; }
th { height: 31px; padding: 0 0 6px 6px; border: 1px solid #c9c9c9; background: #e4e4e4; color: #333; font-weight: 400; text-align: left; }
td { padding: 0; border: 1px solid #cdcdcd; background: #e6e6e6; }
td:nth-child(n+5) { background: #fff; }
.filler { width: 24px; margin-top: 31px; background: #e6e6e6; }
.matrix-side { display: flex; width: 25px; padding-top: 31px; border-left: 1px solid #bbb; }
.matrix-side .scroll { border-left: 0; }
.actions { display: flex; justify-content: flex-end; gap: 33px; padding-top: 17px; }
.actions button { width: 91px; height: 30px; border: 2px solid #858585; background: linear-gradient(#f8e6b0, #f2cf55); }
.actions .primary { background: linear-gradient(#fcc22f, #f0911a) 0 0 / 12px 100% no-repeat, linear-gradient(#f8e6b0, #f2cf55); }

/* Status bar */
.statusbar { position: relative; display: flex; align-items: flex-start; height: 61px; padding: 9px 0 0 10px; background: linear-gradient(#fdfdfd 3px, #d4d4d4 4px, #fdfdfd 30px); font-size: 13px; }
.statusbar output { height: 20px; border: 2px solid #c4c4c4; border-radius: 3px; background: #e6e6e6; line-height: 16px; }
.message { flex: 814; padding-left: 2px; }
.statusbar > time { flex: none; width: 119px; text-align: center; font-weight: 500; }
.slot { flex: 328; margin-right: 6px; }
.slot.last { flex: 323; }
.sap { display: flex; flex: none; width: 159px; gap: 3px; padding: 4px 0 0 25px; color: #999; }
.sap strong { font: 900 30px/34px "Noto Sans", sans-serif; }
.sap span { display: flex; flex-direction: column; }
.sap small { font-size: 11px; line-height: 13px; }
.sap em { color: #f0ab1e; font-size: 18px; font-style: normal; font-weight: 700; line-height: 20px; }
.resize { position: absolute; right: 2px; bottom: 4px; width: 16px; height: 18px; }

/* Taskbar */
.taskbar { display: flex; height: 48px; overflow: hidden; background: linear-gradient(90deg, #213a42, #20363f 55%, #1a2745 80%, #1b2848); color: #fff; }
.start { width: 67px; padding-top: 12px; }
.start svg { width: 24px; height: 26px; }
.find { display: flex; align-items: center; gap: 15px; width: 479px; padding: 10px 0 0 16px; background: #f2f2f2; box-shadow: inset 0 2px #ccc; }
.find svg { width: 24px; height: 26px; margin-bottom: 2px; }
.find input { flex: 1; height: 38px; padding-top: 2px; font-size: 20px; }
.find input::placeholder { color: #222; opacity: 1; }
.pins { display: flex; width: 764px; }
.pins button { flex: 1; padding-top: 13px; }
.pins .running { background: #4b5a66; }
.pins svg { width: 34px; height: 34px; }
.tray { display: flex; flex: 1; justify-content: flex-end; align-items: center; gap: 11px; padding: 0 15px 0 0; }
.tray > svg { width: 22px; height: 24px; margin-top: 14px; }
.clock { display: flex; flex-direction: column; align-items: center; align-self: flex-start; width: 84px; margin-left: 1px; padding-top: 3px; font-size: 16px; line-height: 28px; }
.notes { position: relative; width: 34px; margin-left: 12px; padding-top: 14px; align-items: flex-start; justify-content: flex-start; align-self: stretch; }
.notes svg { width: 24px; height: 26px; margin-top: 4px; }
.notes span { position: absolute; left: 10px; top: 29px; width: 24px; height: 24px; border: 1px solid #888; border-radius: 50%; background: #2d3038; font-size: 15px; line-height: 22px; }

/* Keyboard deck and shadow */
.base { position: relative; height: 14px; background: linear-gradient(90deg, #a9a9a9, #e4e4e4 3%, #e8e8e8 20%, #c9c9c9 40%, #d0d0d0 64%, #c6c6c6 73%, #e2e2e2 74%, #ededed 90%, #e4e4e4 97%, #a9a9a9); }
.base::before, .base::after { content: ""; position: absolute; z-index: -1; filter: blur(32px); border-radius: 60px; }
.base::before { top: 6px; left: 54px; right: 54px; height: 84px; background: #cfcfcf; }
.base::after { top: 24px; right: 180px; width: 300px; height: 50px; background: #b9b9b9; opacity: .5; }
.belly { position: absolute; top: 0; left: 0; width: 100%; height: 40px; }
.notch { position: absolute; top: 0; left: 50%; width: 386px; height: 11px; margin-left: -194px; border-radius: 0 0 8px 8px; background: linear-gradient(90deg, #8e9094, #d9dadc 7%, #e2e4e6 50%, #d9dadc 93%, #8e9094); }
```
